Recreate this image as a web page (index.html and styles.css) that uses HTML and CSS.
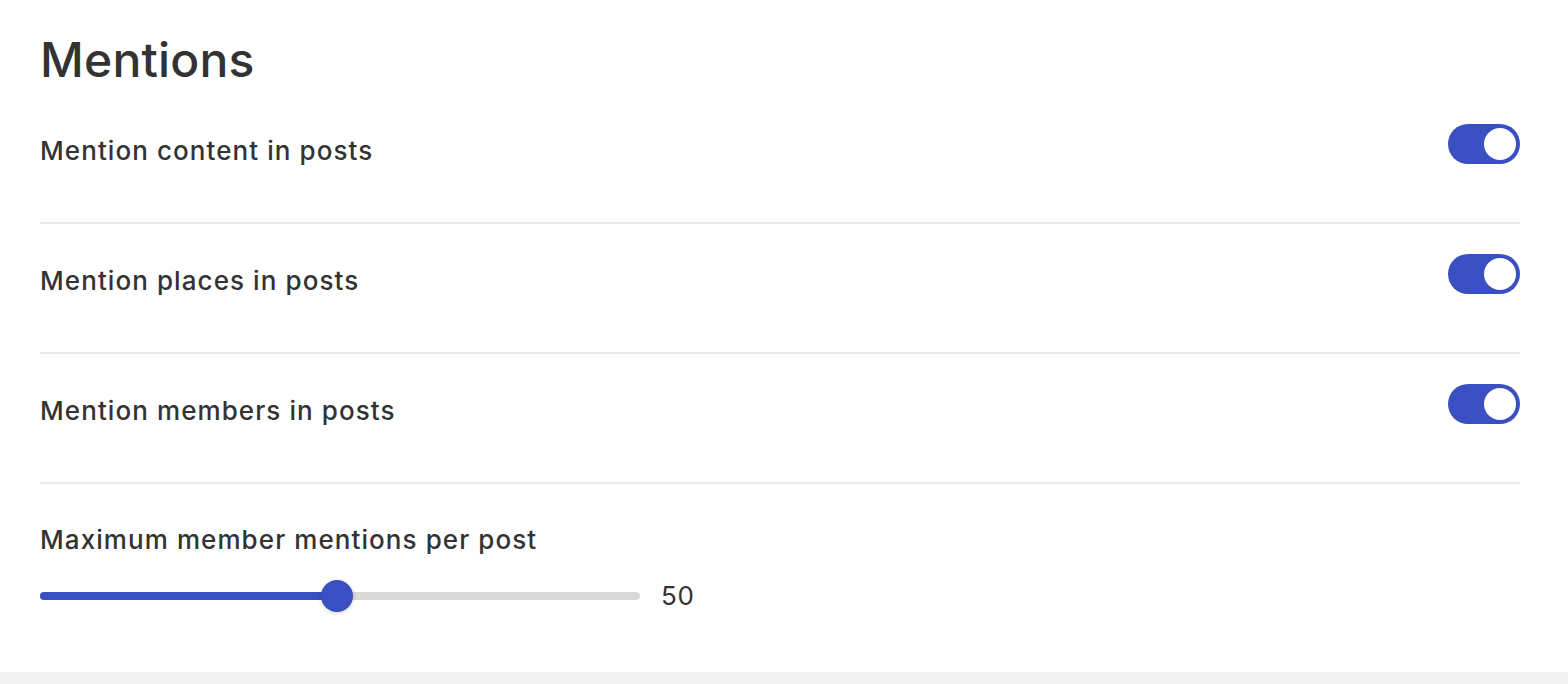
FILE: index.html
```html
<!DOCTYPE html>
<html lang="en">
<head>
    <meta charset="UTF-8">
    <title>Mentions</title>
    <link rel="stylesheet" href="styles.css">
</head>
<body>
    <section class="panel">
        <h1>Mentions</h1>

        <div class="setting-row">
            <span class="setting-label">Mention content in posts</span>
            <span class="toggle on"><span class="knob"></span></span>
        </div>
        <div class="setting-row">
            <span class="setting-label">Mention places in posts</span>
            <span class="toggle on"><span class="knob"></span></span>
        </div>
        <div class="setting-row">
            <span class="setting-label">Mention members in posts</span>
            <span class="toggle on"><span class="knob"></span></span>
        </div>

        <div class="slider-block">
            <div class="setting-label">Maximum member mentions per post</div>
            <div class="slider-row">
                <div class="slider">
                    <div class="slider-fill" style="width: calc(16px + (100% - 32px) * 0.495)"></div>
                    <div class="slider-thumb" style="left: calc(16px + (100% - 32px) * 0.495)"></div>
                </div>
                <span class="slider-value">50</span>
            </div>
        </div>
    </section>
</body>
</html>
```

FILE: styles.css
```css
body {
    margin: 0;
    background: #f2f2f2;
    font-family: 'Inter', 'Noto Sans', sans-serif;
    color: #333333;
}

.panel {
    background: #ffffff;
    padding: 32px 48px 0 40px;
    height: 640px;
}

h1 {
    font-size: 48px;
    line-height: 56px;
    font-weight: 500;
    margin: 0 0 6px;
    letter-spacing: 0.2px;
}

.setting-row {
    display: flex;
    justify-content: space-between;
    align-items: flex-start;
    padding: 30px 0 55px;
    border-bottom: 2px solid #e9e9e9;
}

.setting-label {
    font-size: 26px;
    line-height: 32px;
    font-weight: 500;
    letter-spacing: 1.08px;
    margin-top: 11px;
}

.toggle {
    width: 72px;
    height: 40px;
    border-radius: 20px;
    background: #bdbdbd;
    display: flex;
    align-items: center;
    padding: 0 4px;
    box-sizing: border-box;
}

.toggle.on {
    background: #3a50c2;
    justify-content: flex-end;
}

.knob {
    width: 32px;
    height: 32px;
    border-radius: 50%;
    background: #ffffff;
}

.slider-block {
    padding-top: 40px;
}

.slider-block .setting-label {
    margin-top: 0;
}

.slider-row {
    display: flex;
    align-items: center;
    gap: 21px;
    margin-top: 24px;
    height: 32px;
}

.slider {
    position: relative;
    width: 600px;
    height: 8px;
    border-radius: 4px;
    background: #d9d9d9;
}

.slider-fill {
    height: 100%;
    border-radius: 4px;
    background: #3a50c2;
}

.slider-thumb {
    position: absolute;
    top: 50%;
    width: 32px;
    height: 32px;
    margin: -16px 0 0 -16px;
    border-radius: 50%;
    background: #3a50c2;
    box-shadow: 0 1px 4px rgba(0, 0, 0, 0.18);
}

.slider-value {
    font-size: 26px;
    line-height: 32px;
    letter-spacing: 0.6px;
}
```
